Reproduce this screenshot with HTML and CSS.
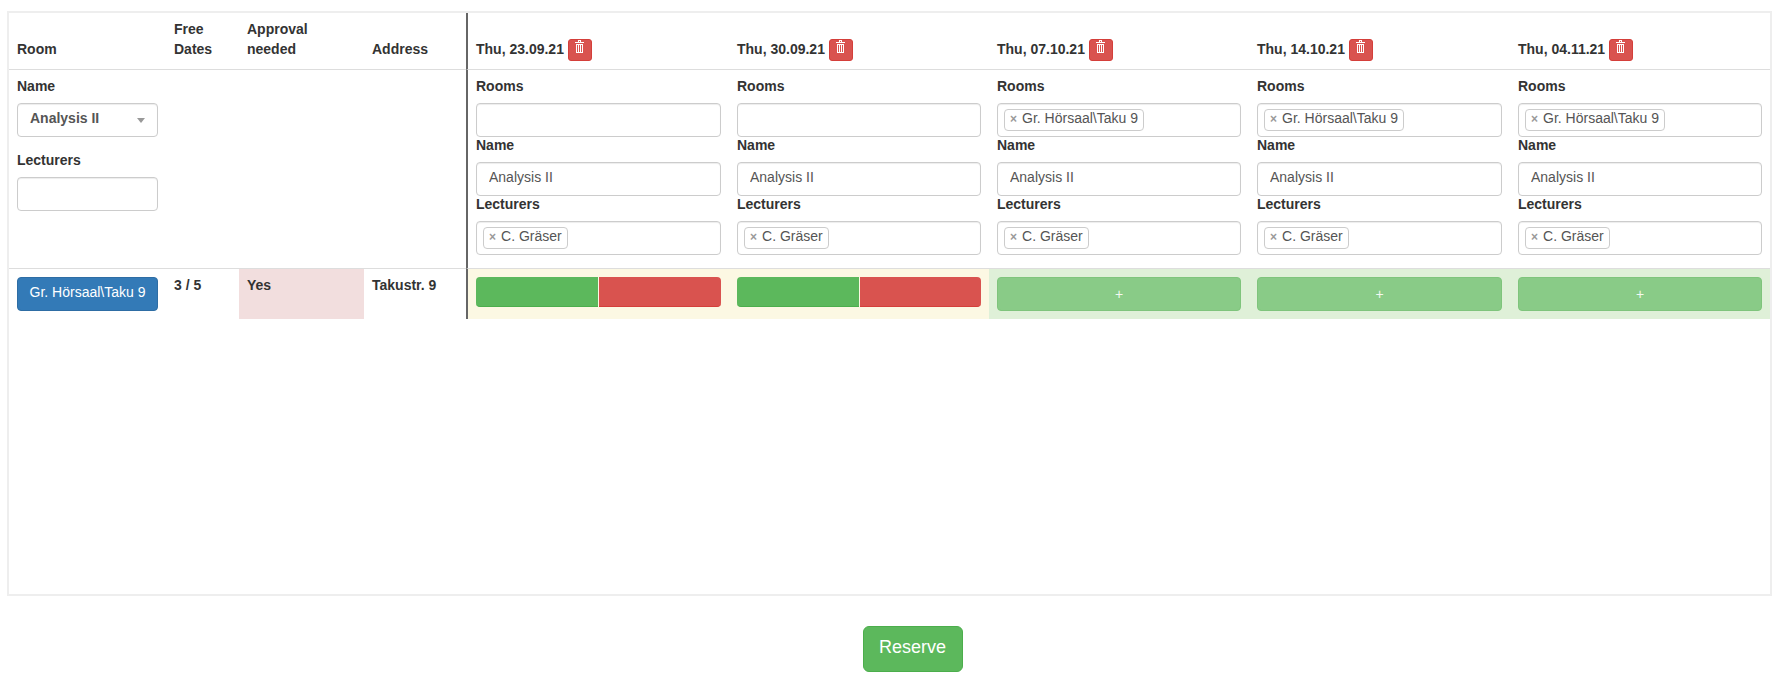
FILE: index.html
```html
<!DOCTYPE html>
<html lang="en">
<head>
    <meta charset="UTF-8">
    <meta name="viewport" content="width=device-width, initial-scale=1.0">
    <title>Reserve rooms</title>
    <link rel="stylesheet" href="styles.css">
</head>
<body>
    <div class="table-wrap">
        <table class="room-table">
            <colgroup>
                <col class="col-room">
                <col class="col-free">
                <col class="col-approval">
                <col class="col-address">
                <col class="col-date-first">
                <col class="col-date">
                <col class="col-date">
                <col class="col-date-wide">
                <col class="col-date">
            </colgroup>
            <thead>
                <tr>
                    <th>Room</th>
                    <th>Free Dates</th>
                    <th>Approval needed</th>
                    <th>Address</th>
                    <th class="date-start">
                        <div class="date-head">
                            <span>Thu, 23.09.21</span>
                            <button class="btn-trash"><svg class="icon-trash" viewBox="0 0 9 13"><path fill-rule="evenodd" d="M0 2h3V0h3v2h3v1H0zM4 1v1h1V1zM1 4h7v9H1zM2 5v7h1V5zM4 5v7h1V5zM6 5v7h1V5z"/></svg></button>
                        </div>
                    </th>
                    <th>
                        <div class="date-head">
                            <span>Thu, 30.09.21</span>
                            <button class="btn-trash"><svg class="icon-trash" viewBox="0 0 9 13"><path fill-rule="evenodd" d="M0 2h3V0h3v2h3v1H0zM4 1v1h1V1zM1 4h7v9H1zM2 5v7h1V5zM4 5v7h1V5zM6 5v7h1V5z"/></svg></button>
                        </div>
                    </th>
                    <th>
                        <div class="date-head">
                            <span>Thu, 07.10.21</span>
                            <button class="btn-trash"><svg class="icon-trash" viewBox="0 0 9 13"><path fill-rule="evenodd" d="M0 2h3V0h3v2h3v1H0zM4 1v1h1V1zM1 4h7v9H1zM2 5v7h1V5zM4 5v7h1V5zM6 5v7h1V5z"/></svg></button>
                        </div>
                    </th>
                    <th>
                        <div class="date-head">
                            <span>Thu, 14.10.21</span>
                            <button class="btn-trash"><svg class="icon-trash" viewBox="0 0 9 13"><path fill-rule="evenodd" d="M0 2h3V0h3v2h3v1H0zM4 1v1h1V1zM1 4h7v9H1zM2 5v7h1V5zM4 5v7h1V5zM6 5v7h1V5z"/></svg></button>
                        </div>
                    </th>
                    <th>
                        <div class="date-head">
                            <span>Thu, 04.11.21</span>
                            <button class="btn-trash"><svg class="icon-trash" viewBox="0 0 9 13"><path fill-rule="evenodd" d="M0 2h3V0h3v2h3v1H0zM4 1v1h1V1zM1 4h7v9H1zM2 5v7h1V5zM4 5v7h1V5zM6 5v7h1V5z"/></svg></button>
                        </div>
                    </th>
                </tr>
            </thead>
            <tbody>
                <tr class="filter-row">
                    <td>
                        <label>Name</label>
                        <div class="field select-box">
                            <span>Analysis II</span>
                            <span class="caret"></span>
                        </div>
                        <label class="label-spaced">Lecturers</label>
                        <div class="field"></div>
                    </td>
                    <td></td>
                    <td></td>
                    <td></td>
                    <td class="date-start">
                        <label>Rooms</label>
                        <div class="field"></div>
                        <label>Name</label>
                        <input class="field text-field" type="text" value="Analysis II">
                        <label>Lecturers</label>
                        <div class="field"><span class="tag"><span class="tag-x">×</span>C. Gräser</span></div>
                    </td>
                    <td>
                        <label>Rooms</label>
                        <div class="field"></div>
                        <label>Name</label>
                        <input class="field text-field" type="text" value="Analysis II">
                        <label>Lecturers</label>
                        <div class="field"><span class="tag"><span class="tag-x">×</span>C. Gräser</span></div>
                    </td>
                    <td>
                        <label>Rooms</label>
                        <div class="field"><span class="tag"><span class="tag-x">×</span>Gr. Hörsaal\Taku 9</span></div>
                        <label>Name</label>
                        <input class="field text-field" type="text" value="Analysis II">
                        <label>Lecturers</label>
                        <div class="field"><span class="tag"><span class="tag-x">×</span>C. Gräser</span></div>
                    </td>
                    <td>
                        <label>Rooms</label>
                        <div class="field"><span class="tag"><span class="tag-x">×</span>Gr. Hörsaal\Taku 9</span></div>
                        <label>Name</label>
                        <input class="field text-field" type="text" value="Analysis II">
                        <label>Lecturers</label>
                        <div class="field"><span class="tag"><span class="tag-x">×</span>C. Gräser</span></div>
                    </td>
                    <td>
                        <label>Rooms</label>
                        <div class="field"><span class="tag"><span class="tag-x">×</span>Gr. Hörsaal\Taku 9</span></div>
                        <label>Name</label>
                        <input class="field text-field" type="text" value="Analysis II">
                        <label>Lecturers</label>
                        <div class="field"><span class="tag"><span class="tag-x">×</span>C. Gräser</span></div>
                    </td>
                </tr>
                <tr class="room-row">
                    <td><button class="btn btn-room">Gr. Hörsaal\Taku 9</button></td>
                    <td class="cell-text">3 / 5</td>
                    <td class="cell-text cell-danger">Yes</td>
                    <td class="cell-text">Takustr. 9</td>
                    <td class="date-start cell-warning">
                        <div class="split-bar"><span class="split-yes"></span><span class="split-no"></span></div>
                    </td>
                    <td class="cell-warning">
                        <div class="split-bar"><span class="split-yes"></span><span class="split-no"></span></div>
                    </td>
                    <td class="cell-success"><button class="btn btn-add">+</button></td>
                    <td class="cell-success"><button class="btn btn-add">+</button></td>
                    <td class="cell-success"><button class="btn btn-add">+</button></td>
                </tr>
            </tbody>
        </table>
    </div>

    <div class="actions">
        <button class="btn-reserve">Reserve</button>
    </div>
</body>
</html>
```

FILE: styles.css
```css
body {
    font-family: "Liberation Sans", Arial, sans-serif;
    font-size: 14px;
    line-height: 20px;
    color: #333;
    margin: 11px 16px 10px 7px;
    background-color: #fff;
}

.table-wrap {
    height: 585px;
    box-sizing: border-box;
    border: 2px solid #eee;
}

.room-table {
    width: 100%;
    table-layout: fixed;
    border-collapse: separate;
    border-spacing: 0;
}

.col-room { width: 157px; }
.col-free { width: 73px; }
.col-approval { width: 125px; }
.col-address { width: 102px; }
.col-date-first { width: 263px; }
.col-date { width: 260px; }
.col-date-wide { width: 261px; }

.room-table th,
.room-table td {
    padding: 8px;
    text-align: left;
    box-sizing: border-box;
}

.room-table th {
    padding: 6px 8px 10px;
    vertical-align: bottom;
    border-bottom: 1px solid #ddd;
}

.room-table td {
    vertical-align: top;
}

.room-table .date-start {
    border-left: 2px solid #666;
}

.room-table th:nth-child(n+5) {
    padding-bottom: 8px;
}

.date-head {
    display: flex;
    align-items: flex-end;
    gap: 4px;
}

.date-head span {
    margin-bottom: 2px;
}

.btn-trash {
    display: flex;
    justify-content: flex-start;
    align-items: flex-start;
    width: 24px;
    height: 22px;
    padding: 0 0 0 6px;
    box-sizing: border-box;
    background-color: #d9534f;
    border: 1px solid #d43f3a;
    border-radius: 3px;
}

.icon-trash {
    width: 9px;
    height: 13px;
    fill: #fff;
}

.filter-row td {
    padding-bottom: 13px;
    border-bottom: 1px solid #ddd;
}

label {
    display: block;
    font-weight: bold;
    line-height: 16px;
    margin-bottom: 9px;
}

.label-spaced {
    margin-top: 15px;
}

.field {
    display: flex;
    align-items: flex-start;
    width: 100%;
    height: 34px;
    padding: 5px 6px;
    box-sizing: border-box;
    background-color: #fff;
    border: 1px solid #ccc;
    border-radius: 4px;
    box-shadow: inset 0 1px 1px rgba(0, 0, 0, 0.075);
}

.text-field {
    display: block;
    padding: 4px 12px 8px;
    font-family: inherit;
    font-size: 14px;
    line-height: 20px;
    color: #555;
}

.select-box {
    justify-content: space-between;
    align-items: center;
    padding: 0 12px;
    font-weight: bold;
    color: #555;
}

.select-box span:first-child {
    margin-top: -4px;
}

.caret {
    border-style: solid;
    border-color: #999 transparent transparent;
    border-width: 5px 4px 0;
}

.tag {
    height: 22px;
    padding: 0 5px 4px;
    box-sizing: border-box;
    line-height: 16px;
    color: #555;
    background-color: #fff;
    border: 1px solid #ccc;
    border-radius: 4px;
}

.tag-x {
    font-size: 12px;
    font-weight: bold;
    color: #999;
    margin-right: 5px;
}

.btn {
    display: block;
    width: 100%;
    height: 34px;
    padding: 6px 12px;
    font-family: inherit;
    font-size: 14px;
    line-height: 20px;
    color: #fff;
    white-space: nowrap;
    border-radius: 4px;
}

.btn-room {
    padding: 4px 0 8px;
    background-color: #337ab7;
    border: 1px solid #2e6da4;
}

.btn-add {
    background-color: #5cb85c;
    border: 1px solid #4cae4c;
    opacity: 0.65;
}

.room-row td {
    font-weight: bold;
}

.room-table .cell-text {
    padding-top: 6px;
}

.cell-danger {
    background-color: #f2dede;
}

.cell-warning {
    background-color: #fcf8e3;
}

.cell-success {
    background-color: #dff0d8;
}

.split-bar {
    display: flex;
    gap: 1px;
    height: 30px;
}

.split-yes,
.split-no {
    flex: 1;
    box-sizing: border-box;
}

.split-yes {
    background-color: #5cb85c;
    border-bottom: 1px solid #4cae4c;
    border-radius: 4px 0 0 4px;
}

.split-no {
    background-color: #d9534f;
    border-bottom: 1px solid #d43f3a;
    border-radius: 0 4px 4px 0;
}

.actions {
    margin-top: 30px;
    padding-left: 46px;
    text-align: center;
}

.btn-reserve {
    width: 100px;
    height: 46px;
    padding: 8px 0 12px;
    font-family: inherit;
    font-size: 18px;
    line-height: 24px;
    color: #fff;
    background-color: #5cb85c;
    border: 1px solid #4cae4c;
    border-radius: 6px;
}
```
